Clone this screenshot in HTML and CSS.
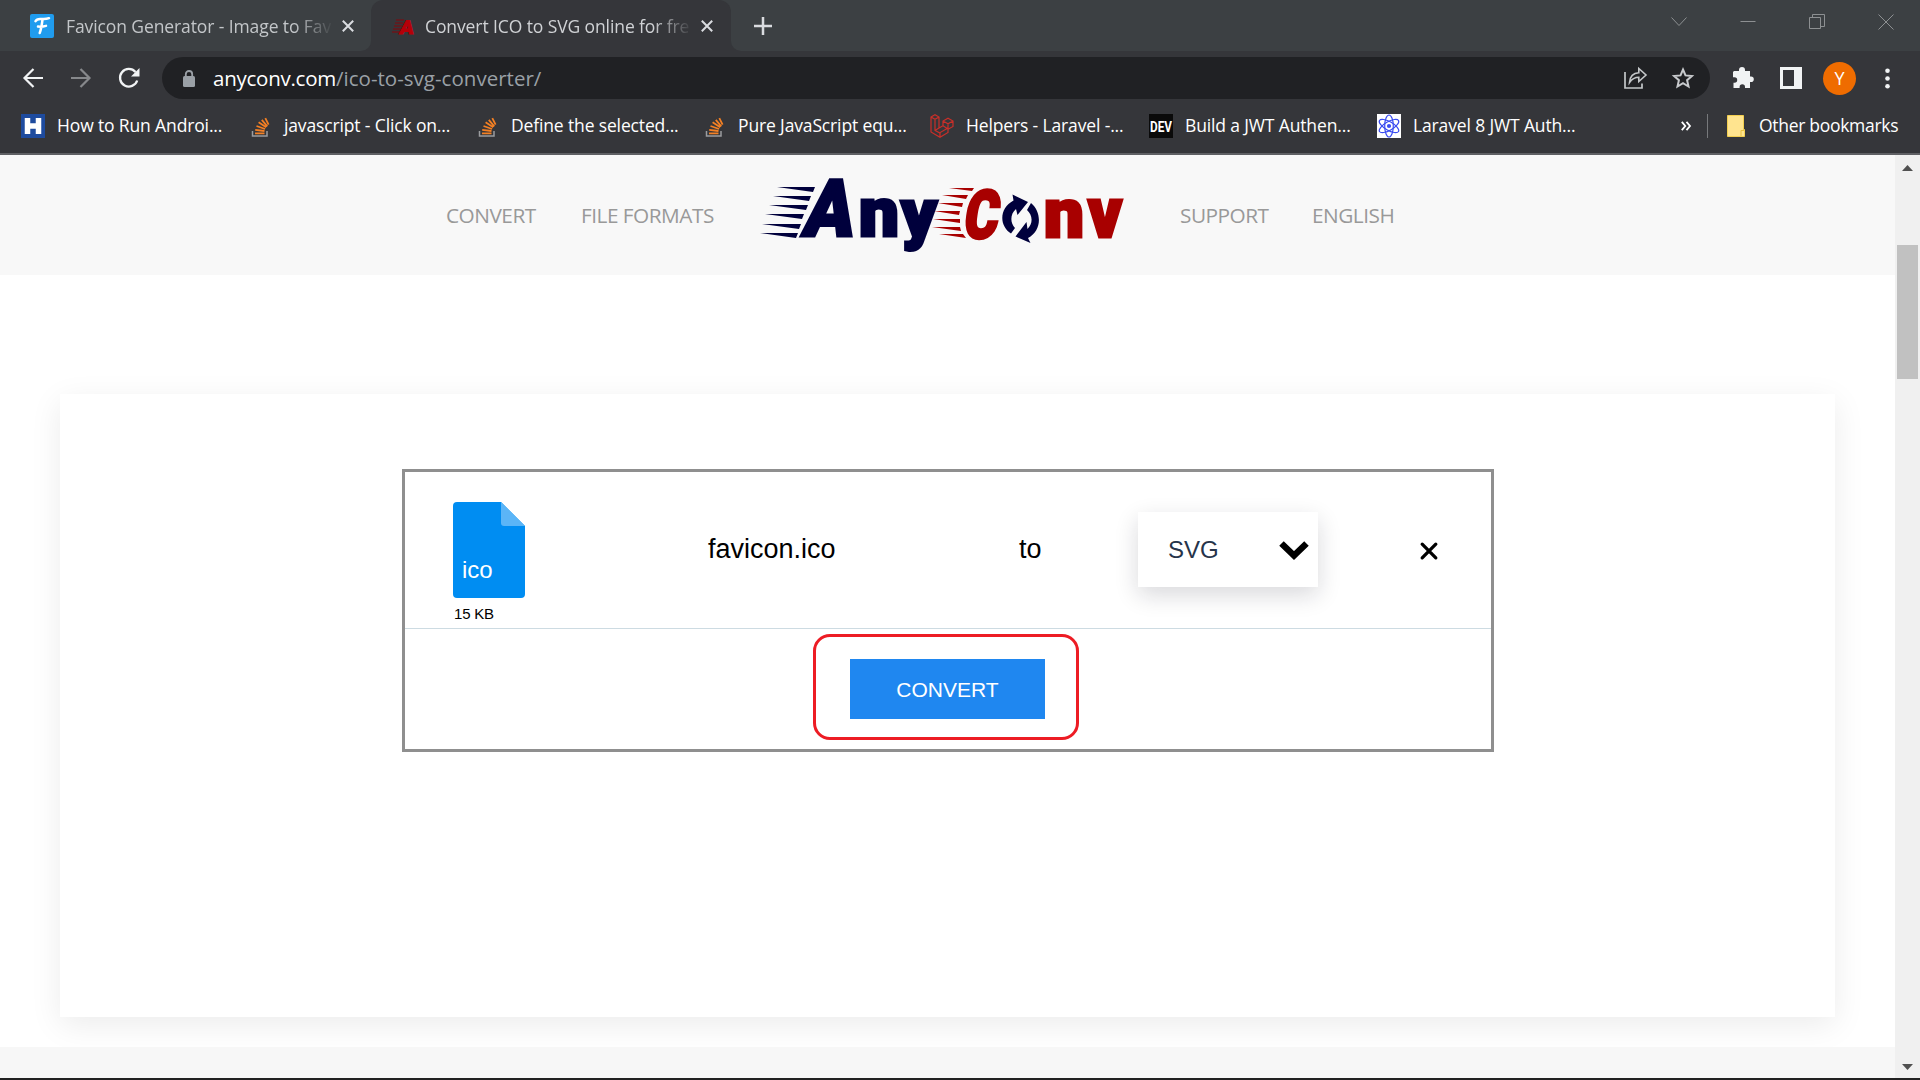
FILE: index.html
```html
<!DOCTYPE html>
<html lang="en">
<head>
<meta charset="utf-8">
<title>Convert ICO to SVG online for free</title>
<link rel="stylesheet" href="styles.css">
</head>
<body>
<svg class="defs" width="0" height="0">
  <symbol id="stack" viewBox="0 0 24 24"><path d="M4.500 17v5h14.500V17" fill="none" stroke="#9a9c9f" stroke-width="1.500"/><g stroke="#f48024" stroke-width="1.800" fill="none"><path d="M7 19.300h9.500M7.200 15.800l9.300 1.200M8.500 12l8.600 3M10.600 8.200l7.600 5.100M13.800 5.800l5.500 6.500M17.300 4.200l3.300 6.500"/></g></symbol>
  <symbol id="close" viewBox="0 0 12 12"><path d="M.8.800l10.400 10.400M11.200.800L.8 11.200" fill="none" stroke="#dadce0" stroke-width="2"/></symbol>
</svg>
<header class="browser">
  <div class="tabs">
    <div class="tab">
      <svg class="fav" viewBox="0 0 24 24"><rect width="24" height="24" rx="2" fill="#209cee"/><path d="M5.500 7.200c1-2.200 3-2.500 6-2.200 3 .3 5 .2 7.500-.8M12.500 5.500c-.6 5-1.200 9.500-2.800 13.500M8 12.600c3 .3 5.500 0 8-.7" stroke="#fff" stroke-width="2.500" fill="none" stroke-linecap="round"/></svg>
      <span class="title">Favicon Generator - Image to Fav</span>
      <svg class="x"><use href="#close"/></svg>
    </div>
    <div class="tab active">
      <svg class="fav" viewBox="0 0 24 24"><g stroke="#86040b" stroke-width="1"><path d="M5 6h8M4 9h8M3 12h8M2 15h8M1 18h8"/></g><text transform="translate(8 19.500) skewX(-8)" font-size="19" textLength="14" lengthAdjust="spacingAndGlyphs" class="mark" fill="#b50008" stroke="#b50008">A</text></svg>
      <span class="title">Convert ICO to SVG online for fre</span>
      <svg class="x"><use href="#close"/></svg>
    </div>
    <div class="strip">
      <svg class="plus" viewBox="0 0 18 18"><path d="M9 0v18M0 9h18" stroke="#dadce0" stroke-width="2.500"/></svg>
      <div class="window">
        <svg viewBox="0 0 16 16"><path d="M.5 3.500L8 11.500l7.500-8"/></svg>
        <svg viewBox="0 0 16 16"><path d="M.5 7.500h15"/></svg>
        <svg viewBox="0 0 16 16"><path d="M.5 3.500h11v11H.500zM3.500 3.500v-3h12v12h-4"/></svg>
        <svg viewBox="0 0 16 16"><path d="M.5.500l15 15M15.500.500l-15 15"/></svg>
      </div>
    </div>
  </div>
  <div class="toolbar">
    <svg class="back" viewBox="0 0 20 20"><path d="M20 10H1.500M10.500 1L1.500 10l9 9" fill="none" stroke="#f1f3f4" stroke-width="2.200"/></svg>
    <svg class="forward" viewBox="0 0 20 20"><path d="M0 10h18.500M9.500 1l9 9-9 9" fill="none" stroke="#86888b" stroke-width="2.200"/></svg>
    <svg class="reload" viewBox="0 0 22 22"><path d="M19.200 13.500A8.800 8.800 0 1 1 17.500 5" fill="none" stroke="#f1f3f4" stroke-width="2.300"/><path d="M21.500 1v8.500H13z" fill="#f1f3f4"/></svg>
    <div class="address">
      <svg class="lock" viewBox="0 0 12 17"><rect y="6" width="12" height="11" rx="1.500" fill="#9aa0a6"/><path d="M2.800 7V4.200a3.200 3.200 0 0 1 6.400 0V7" fill="none" stroke="#9aa0a6" stroke-width="1.800"/></svg>
      <span class="url">anyconv.com<span class="path">/ico-to-svg-converter/</span></span>
      <svg class="share" viewBox="0 0 23 22"><path d="M1 5v16h17v-4.500" fill="none" stroke="#c4c7c9" stroke-width="1.700"/><path d="M5.500 15.500C6 9.500 9.500 6 14.800 5.800V1.500L22 8l-7.200 6.500v-4.200c-4 0-6.800 1.500-9.300 5.200z" fill="none" stroke="#c4c7c9" stroke-width="1.600"/></svg>
      <svg class="star" viewBox="0 0 22 22"><path d="M11 2.500l2.500 5.900 6.400.6-4.800 4.200 1.400 6.300L11 16.200l-5.500 3.300 1.400-6.300L2.100 9l6.400-.6z" fill="none" stroke="#c8cacd" stroke-width="2"/></svg>
    </div>
    <svg class="puzzle" viewBox="0 0 22 22"><path d="M2 4h5V3a3 3 0 0 1 6 0v1h5v5.500h1a2.800 2.800 0 0 1 0 5.600h-1V21h-5v-1a2.700 2.700 0 0 0-5.400 0v1H1.500v-5.300h1a2.700 2.700 0 0 0 0-5.400H1V5z" fill="#f1f3f4"/></svg>
    <svg class="panel" viewBox="0 0 22 22"><path fill="#f1f3f4" fill-rule="evenodd" d="M0 0h22v22H0zM3 3v16h11V3z"/></svg>
    <div class="avatar">Y</div>
    <svg class="dots" viewBox="0 0 5 21"><g fill="#f1f3f4"><circle cx="2.500" cy="2.800" r="2.300"/><circle cx="2.500" cy="10.500" r="2.300"/><circle cx="2.500" cy="18.200" r="2.300"/></g></svg>
  </div>
  <div class="bookmarks">
    <div class="list">
      <div class="bm"><svg viewBox="0 0 24 24"><rect width="24" height="24" fill="#1e4b9e"/><path d="M6.500 4v16M17.500 4v16M7 12h10" stroke="#fff" stroke-width="5.500"/></svg><span>How to Run Androi...</span></div>
      <div class="bm"><svg><use href="#stack"/></svg><span>javascript - Click on...</span></div>
      <div class="bm"><svg><use href="#stack"/></svg><span>Define the selected...</span></div>
      <div class="bm"><svg><use href="#stack"/></svg><span>Pure JavaScript equ...</span></div>
      <div class="bm"><svg viewBox="0 0 24 24"><path d="M1 3l4-2.200L9 3v11l4-2.300V7l5-2.800L23 7v5.500l-5 2.800v3.200L10 23.200 1 18zM1 3l4 2.300L9 3M5 5.300v11.200l4.500 2.400 8.500-5M9 14l-4 2.500M13 7l5 2.700L23 7M18 9.700v5.600M10 18.700v4.500M13 11.700l5 3.200" fill="none" stroke="#c92f29" stroke-width="1.200"/></svg><span>Helpers - Laravel -...</span></div>
      <div class="bm"><svg viewBox="0 0 24 24"><rect width="24" height="24" fill="#0a0a0a"/><text x="1" y="17.500" font-size="15" textLength="22" lengthAdjust="spacingAndGlyphs" class="dev">DEV</text></svg><span>Build a JWT Authen...</span></div>
      <div class="bm"><svg viewBox="0 0 24 24"><rect width="24" height="24" fill="#fff"/><g fill="none" stroke="#3a4cf0" stroke-width="1.200"><ellipse cx="12" cy="12" rx="4.300" ry="11"/><ellipse cx="12" cy="12" rx="4.300" ry="11" transform="rotate(60 12 12)"/><ellipse cx="12" cy="12" rx="4.300" ry="11" transform="rotate(120 12 12)"/></g><circle cx="12" cy="12" r="2.100" fill="#3a4cf0"/></svg><span>Laravel 8 JWT Auth...</span></div>
    </div>
    <svg class="more" viewBox="0 0 10 10"><path d="M.8.800L4.300 5 .8 9.200M5.500.800L9 5 5.500 9.200" fill="none" stroke="#fff" stroke-width="1.800"/></svg>
    <div class="other">
      <svg class="folder" viewBox="0 0 18 22"><path d="M.5.500h16v14h1v7H.500z" fill="#ffe48f" stroke="#f3cf50"/><path d="M14 21v-5.500h3" fill="none" stroke="#e9c13f"/></svg>
      <span>Other bookmarks</span>
    </div>
  </div>
</header>
<div class="viewport">
  <main class="page">
    <nav class="site-nav">
      <a class="n1">CONVERT</a>
      <a class="n2">FILE FORMATS</a>
      <svg class="logo" viewBox="0 0 364 76">
        <g fill="#00003c" stroke="#00003c">
          <path stroke="none" d="M17 8h38l-2 5zM13 17h38l-2 5zM9 26h39l-2 5zM5 35h39l-2 5zM2 45h39l-2 5zM0 54h38l-2 5z"/>
          <text class="mark heavy" transform="translate(41 57.200) skewX(-10)" font-size="79" textLength="50" lengthAdjust="spacingAndGlyphs">A</text>
          <text class="mark heavy" x="99" y="57" font-size="69" textLength="40" lengthAdjust="spacingAndGlyphs">n</text>
          <text class="mark heavy" x="141" y="57" font-size="67" textLength="36" lengthAdjust="spacingAndGlyphs">y</text>
        </g>
        <g fill="#a80000" stroke="#a80000">
          <path stroke="none" d="M189 9h25l-2 3zM182 16h26l-2 4zM178 24h25l-1 4zM174 32h26l-1 4zM173 40h27v4zM172 48h28l1 4zM179 55h24l3 4z"/>
          <text class="mark heavy" transform="translate(202 58.500) skewX(-9)" font-size="67" textLength="34" lengthAdjust="spacingAndGlyphs">C</text>
          <text class="mark heavy" x="284" y="58" font-size="69" textLength="40" lengthAdjust="spacingAndGlyphs">n</text>
          <text class="mark heavy" x="328" y="58" font-size="70" textLength="34" lengthAdjust="spacingAndGlyphs">v</text>
        </g>
        <g fill="#00003c">
          <path d="M252.500 15.500l15.500 7.500-10.500 13-1.500-6c-6 5-6 14-1 19l-4 5.500c-12-8-12-25 2.500-33z"/>
          <path d="M271 24c11 9 11 28-3 35l2.500 5-15-6.500 11-14.500 1 7c6-6 5-14-.5-19z"/>
        </g>
      </svg>
      <a class="n3">SUPPORT</a>
      <a class="n4">ENGLISH</a>
    </nav>
    <section class="card">
      <div class="job">
        <div class="file-row">
          <div class="file">
            <svg viewBox="0 0 72 96"><path d="M4 0h44l24 24v68a4 4 0 0 1-4 4H4a4 4 0 0 1-4-4V4a4 4 0 0 1 4-4z" fill="#008df2"/><path d="M48 0l24 24H51a3 3 0 0 1-3-3z" fill="#5bb5f7"/><text x="9" y="75.500" font-size="24" class="ext">ico</text></svg>
            <span>15 KB</span>
          </div>
          <div class="name">favicon.ico</div>
          <div class="to">to</div>
          <div class="select"><span>SVG</span><svg viewBox="0 0 30 20"><path d="M2.500 3.500L15 15.500l12.500-12" fill="none" stroke="#000" stroke-width="6.500"/></svg></div>
          <svg class="remove" viewBox="0 0 18 18"><path d="M2.200 2.200l13.600 13.600M15.800 2.200L2.200 15.800" stroke="#000" stroke-width="3.300" stroke-linecap="round"/></svg>
        </div>
        <div class="action-row">
          <div class="highlight"><button class="convert">CONVERT</button></div>
        </div>
      </div>
    </section>
    <footer class="below"></footer>
  </main>
  <aside class="scrollbar">
    <svg viewBox="0 0 11 6"><path d="M5.500 0L11 6H0z"/></svg>
    <div class="thumb"></div>
    <svg viewBox="0 0 11 6"><path d="M5.500 6L0 0h11z"/></svg>
  </aside>
</div>
</body>
</html>
```
FILE: styles.css
```css
* { box-sizing: border-box; }
body {
  margin: 0;
  width: 1920px;
  height: 1080px;
  overflow: hidden;
  display: flex;
  flex-direction: column;
  font-family: "Open Sans", "Noto Sans", sans-serif;
  background: #222;
}
svg { display: block; flex: none; overflow: visible; }
.defs { display: none; }
.mark { font-family: Roboto, sans-serif; font-weight: 900; }
.heavy { stroke-width: 3px; }

.browser { height: 155px; background: #35363a; border-bottom: 2px solid #5f6064; color: #fff; }
/* The upper half shows behind the active tab's top corners, the lower half behind its neighbours' bottom corners. */
.tabs { display: flex; height: 51px; background: linear-gradient(#3c4043 50%, #35363a 50%); }
.tab { display: flex; align-items: center; width: 371px; height: 51px; padding-left: 30px; background: #3c4043; border-radius: 0 0 10px 0; color: #c3c6c9; }
.tab.active { width: 360px; padding-left: 20px; background: #35363a; border-radius: 12px 12px 0 0; color: #d0d2d5; }
.strip { display: flex; align-items: center; flex: 1; background: #3c4043; border-radius: 0 0 0 10px; }
.fav { width: 24px; height: 24px; margin-right: 12px; }
.active .fav { margin-right: 10px; }
.title {
  width: 265px;
  font-size: 17.500px;
  line-height: 50px;
  letter-spacing: -0.100px;
  white-space: nowrap;
  mask-image: linear-gradient(90deg, #000 86%, transparent 101%);
}
.x { width: 12px; height: 12px; margin-left: 11px; }
.plus { width: 18px; height: 18px; margin-left: 23px; }
.window { display: flex; gap: 53px; margin-left: auto; margin-right: 26px; padding-bottom: 8px; }
.window svg { width: 16px; height: 16px; fill: none; stroke: #8d9092; stroke-width: 1; }

.toolbar { display: flex; align-items: center; height: 54px; padding-left: 23px; }
.back { width: 20px; height: 20px; }
.forward { width: 20px; height: 20px; margin-left: 28px; }
.reload { width: 22px; height: 22px; margin-left: 27px; }
.address { display: flex; align-items: center; width: 1548px; height: 42px; margin-left: 22px; padding-left: 21px; border-radius: 21px; background: #202124; }
.lock { width: 12px; height: 17px; }
.url { margin-left: 18px; font-size: 20.500px; line-height: 40px; letter-spacing: -0.250px; }
.path { color: #9aa0a6; letter-spacing: 0.020px; }
.share { width: 23px; height: 22px; margin-left: auto; }
.star { width: 22px; height: 22px; margin: 0 16px 0 25px; }
.puzzle { width: 22px; height: 22px; margin-left: 22px; }
.panel { width: 22px; height: 22px; margin-left: 26px; }
.avatar { width: 33px; height: 33px; margin-left: 21px; border-radius: 50%; background: #ef6c00; font-size: 18px; line-height: 33px; text-align: center; }
.dots { width: 5px; height: 21px; margin-left: 29px; }

.bookmarks { display: flex; align-items: center; height: 42px; padding-left: 21px; font-size: 17.500px; letter-spacing: -0.140px; white-space: nowrap; }
.bookmarks span { padding-bottom: 2px; }
.list { display: grid; grid-template-columns: 227px 227px 227px 228px 219px 228px 228px; }
.bm { display: flex; align-items: center; gap: 12px; }
.bm svg { width: 24px; height: 24px; }
.dev { font-family: Roboto, sans-serif; font-weight: 700; letter-spacing: 0; fill: #fff; }
.more { width: 10px; height: 10px; margin-left: 76px; }
.other { display: flex; align-items: center; gap: 14px; margin-left: 16px; padding-left: 19px; border-left: 1px solid #77797c; height: 24px; letter-spacing: -0.300px; }
.folder { width: 18px; height: 22px; }

.viewport { display: flex; height: 923px; }
.page { width: 1895px; background: #fff; }
.site-nav { display: flex; align-items: center; height: 120px; padding-left: 446px; background: #f8f8f8; font-size: 20.800px; letter-spacing: -0.500px; color: #999; white-space: nowrap; }
.n1 { width: 135px; }
.n2 { width: 179px; }
.n3 { width: 132px; margin-left: 56px; }
.logo { width: 364px; height: 76px; margin-top: 4px; letter-spacing: 0; }
.card {
  width: 1775px;
  height: 623px;
  margin: 119px 0 0 60px;
  padding: 75px 0 0 342px;
  background: #fff;
  box-shadow: 0 8px 30px rgba(0, 0, 0, .08);
}
.job { width: 1092px; height: 283px; border: 3px solid #8f8f8f; font-family: "Liberation Sans", sans-serif; }
.file-row { display: flex; height: 157px; border-bottom: 1px solid #cddbe2; padding-left: 48px; font-size: 27px; line-height: 31px; color: #000; }
.file { display: flex; flex-direction: column; gap: 7px; width: 255px; padding-top: 30px; font-size: 15px; line-height: 18px; }
.file span { padding-left: 1px; letter-spacing: -0.200px; }
.file svg { width: 72px; height: 96px; }
.ext { fill: #fff; }
.name, .to { padding-top: 62px; }
.name { width: 311px; }
.to { width: 119px; }
.select { display: flex; align-items: center; justify-content: space-between; width: 180px; height: 75px; margin-top: 40px; padding: 0 9px 0 30px; background: #fff; font-size: 24px; color: #26344a; box-shadow: 0 8px 22px rgba(20, 20, 40, .16); }
.select svg { width: 30px; height: 20px; }
.remove { width: 18px; height: 18px; margin: 70px 0 0 101.500px; }
.action-row { display: flex; justify-content: center; height: 120px; padding: 5px 4px 0 0; }
.highlight { display: flex; width: 266px; height: 106px; padding: 22px 0 0 34px; border: 3px solid #ed1c24; border-radius: 17px; }
.convert { width: 195px; height: 60px; padding: 1px 0 0; border: 0; background: #1f87f0; color: #fff; font: 21px "Liberation Sans", sans-serif; }
.below { height: 31px; margin-top: 30px; background: #f7f7f7; }
.scrollbar { display: flex; flex-direction: column; align-items: center; width: 25px; background: #f0f0f0; padding: 10px 0 8px; }
.scrollbar svg { width: 11px; height: 6px; fill: #505050; }
.thumb { width: 21px; height: 134px; margin: 74px 0 auto; background: #c1c1c1; }
```
